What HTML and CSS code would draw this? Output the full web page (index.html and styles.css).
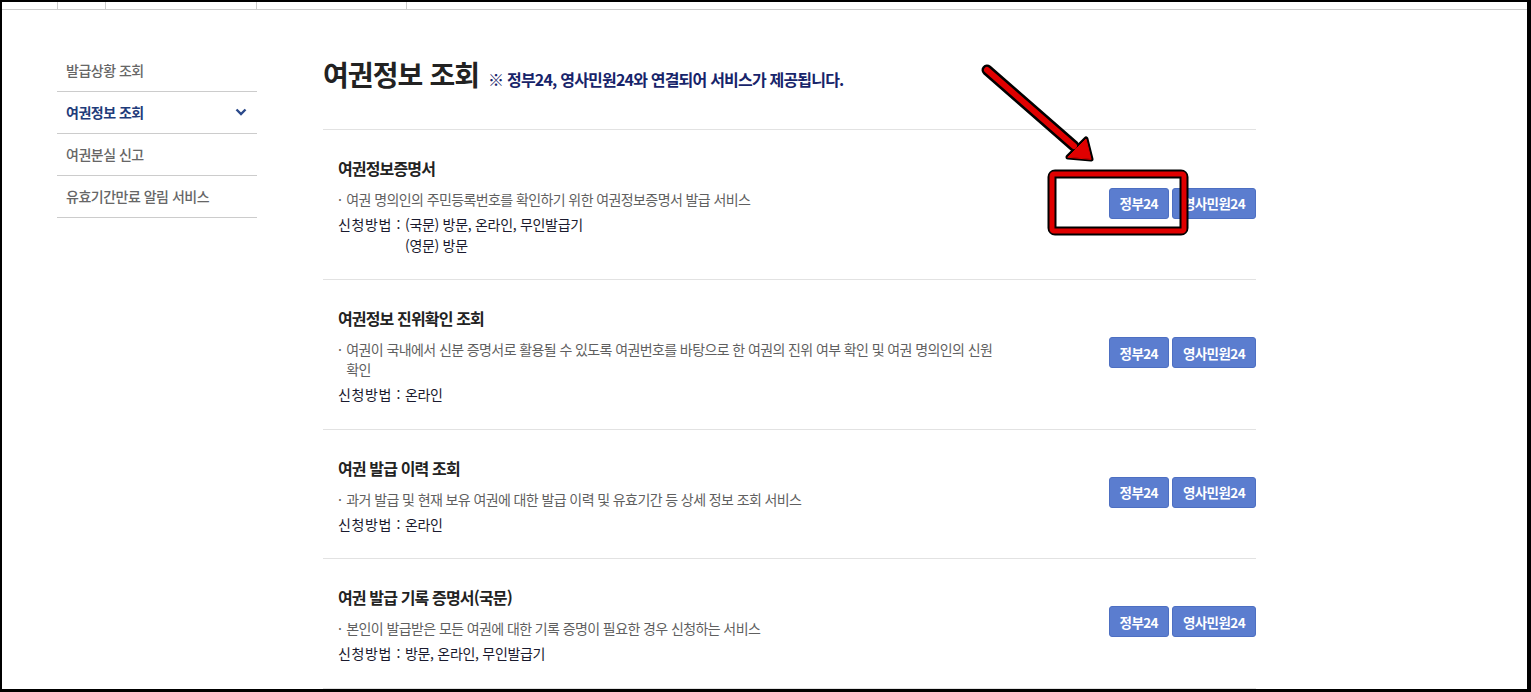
FILE: index.html
```html
<!DOCTYPE html>
<html lang="ko">
  <head>
    <meta charset="UTF-8" />
    <title>여권정보 조회</title>
    <link rel="stylesheet" href="styles.css" />
  </head>
  <body>
    <div class="frame">
      <div class="top-tabs">
        <span class="tab tab-sm"></span>
        <span class="tab tab-md"></span>
        <span class="tab tab-md"></span>
        <span class="tab tab-rest"></span>
      </div>

      <div class="wrap">
        <!-- 사이드 메뉴 -->
        <nav class="side-menu">
          <a href="#" class="side-item">발급상황 조회</a>
          <a href="#" class="side-item active">
            여권정보 조회
            <svg class="chevron" width="12" height="8" viewBox="0 0 12 8">
              <path d="M1.5 1.5 L6 6 L10.5 1.5" fill="none" stroke="#2b4a8b" stroke-width="2.4" />
            </svg>
          </a>
          <a href="#" class="side-item">여권분실 신고</a>
          <a href="#" class="side-item">유효기간만료 알림 서비스</a>
        </nav>

        <main class="content">
          <div class="page-title">
            <h2>여권정보 조회</h2>
            <p class="notice">※ 정부24, 영사민원24와 연결되어 서비스가 제공됩니다.</p>
          </div>

          <ul class="service-list">
            <li class="service">
              <div class="service-info">
                <h3>여권정보증명서</h3>
                <p class="desc"><span class="dot">·</span><span>여권 명의인의 주민등록번호를 확인하기 위한 여권정보증명서 발급 서비스</span></p>
                <div class="method">
                  <span class="method-label">신청방법 :</span>
                  <span class="method-value">(국문) 방문, 온라인, 무인발급기<br />(영문) 방문</span>
                </div>
              </div>
              <div class="service-btns">
                <a href="#" class="btn">정부24</a>
                <a href="#" class="btn">영사민원24</a>
              </div>
            </li>

            <li class="service">
              <div class="service-info">
                <h3>여권정보 진위확인 조회</h3>
                <p class="desc"><span class="dot">·</span><span>여권이 국내에서 신분 증명서로 활용될 수 있도록 여권번호를 바탕으로 한 여권의 진위 여부 확인 및 여권 명의인의 신원 확인</span></p>
                <div class="method">
                  <span class="method-label">신청방법 :</span>
                  <span class="method-value">온라인</span>
                </div>
              </div>
              <div class="service-btns">
                <a href="#" class="btn">정부24</a>
                <a href="#" class="btn">영사민원24</a>
              </div>
            </li>

            <li class="service">
              <div class="service-info">
                <h3>여권 발급 이력 조회</h3>
                <p class="desc"><span class="dot">·</span><span>과거 발급 및 현재 보유 여권에 대한 발급 이력 및 유효기간 등 상세 정보 조회 서비스</span></p>
                <div class="method">
                  <span class="method-label">신청방법 :</span>
                  <span class="method-value">온라인</span>
                </div>
              </div>
              <div class="service-btns">
                <a href="#" class="btn">정부24</a>
                <a href="#" class="btn">영사민원24</a>
              </div>
            </li>

            <li class="service">
              <div class="service-info">
                <h3>여권 발급 기록 증명서(국문)</h3>
                <p class="desc"><span class="dot">·</span><span>본인이 발급받은 모든 여권에 대한 기록 증명이 필요한 경우 신청하는 서비스</span></p>
                <div class="method">
                  <span class="method-label">신청방법 :</span>
                  <span class="method-value">방문, 온라인, 무인발급기</span>
                </div>
              </div>
              <div class="service-btns">
                <a href="#" class="btn">정부24</a>
                <a href="#" class="btn">영사민원24</a>
              </div>
            </li>
          </ul>
        </main>
      </div>
    </div>

    <!-- 강조 표시 (화살표 + 박스) -->
    <svg class="annotation" width="1531" height="692" viewBox="0 0 1531 692">
      <g stroke-linejoin="round" stroke-linecap="round">
        <path d="M987 70 L1074 146" stroke="#000" stroke-width="11" fill="none" />
        <polygon points="1068,157 1086,139 1091,159" fill="#000" stroke="#000" stroke-width="5" />
        <path d="M987 70 L1074 146" stroke="#e00000" stroke-width="6" fill="none" />
        <polygon points="1068,157 1086,139 1091,159" fill="#e00000" stroke="#e00000" stroke-width="1" />
        <rect x="1052" y="174" width="132" height="57" rx="3" fill="none" stroke="#000" stroke-width="9" />
        <rect x="1052" y="174" width="132" height="57" rx="2" fill="none" stroke="#e00000" stroke-width="5" />
      </g>
    </svg>
  </body>
</html>
```

FILE: styles.css
```css
/* Variables */
:root {
  --navy: #1e3b7a;
  --text-dark: #222;
  --text-gray: #5f5f5f;
  --line: #ccc;
  --line-light: #e2e2e2;
  --btn-blue: #5b7dcf;
}

* {
  box-sizing: border-box;
}

body {
  margin: 0;
  background: #000;
  font-family: "Noto Sans CJK KR", "Noto Sans", sans-serif;
}

a {
  text-decoration: none;
}

/* Cadre de la capture */
.frame {
  width: 1531px;
  height: 692px;
  border-style: solid;
  border-color: #000;
  border-width: 2px 4px 3px 2px;
  background: #fff;
  overflow: hidden;
}

/* Bande d'onglets en haut */
.top-tabs {
  display: flex;
  height: 8px;
  border-bottom: 1px solid var(--line);
  padding-left: 55px;
}

.tab {
  border-left: 1px solid var(--line);
}

.tab-sm {
  width: 48px;
}

.tab-md {
  width: 151px;
}

.tab-md + .tab-md {
  width: 150px;
}

.tab-rest {
  flex: 1;
}

.wrap {
  display: flex;
  gap: 66px;
  padding-left: 55px;
}

/* Menu latéral */
.side-menu {
  width: 200px;
  margin-top: 40px;
  display: flex;
  flex-direction: column;
}

.side-item {
  display: flex;
  align-items: center;
  justify-content: space-between;
  height: 42px;
  padding: 0 9px 1px;
  border-bottom: 1px solid var(--line);
  color: #666;
  font-size: 14px;
  font-weight: 500;
  letter-spacing: -0.5px;
}

.side-item.active {
  color: var(--navy);
  font-weight: 700;
}

.chevron {
  margin-right: 1px;
}

/* Contenu principal */
.content {
  width: 933px;
  margin-top: 40px;
}

.page-title {
  display: flex;
  align-items: baseline;
  gap: 9px;
  height: 50px;
  margin-bottom: 29px;
}

.page-title h2 {
  margin: 0;
  font-size: 28px;
  line-height: 48px;
  font-weight: 700;
  color: var(--text-dark);
  letter-spacing: -0.9px;
}

.notice {
  margin: 0;
  font-size: 16px;
  font-weight: 700;
  color: #17246a;
  letter-spacing: -0.8px;
}

.service-list {
  list-style: none;
  margin: 0;
  padding: 0;
  border-top: 1px solid var(--line-light);
}

.service {
  display: flex;
  align-items: center;
  justify-content: space-between;
  padding: 27px 0 24px 15px;
  border-bottom: 1px solid var(--line-light);
}

.service-info h3 {
  margin: 0 0 10px;
  font-size: 16px;
  line-height: 22px;
  font-weight: 700;
  color: var(--text-dark);
  letter-spacing: -0.85px;
}

.desc {
  display: flex;
  gap: 5px;
  width: 665px;
  margin: 0;
  font-size: 14px;
  line-height: 20px;
  color: var(--text-gray);
  letter-spacing: -0.6px;
}

.dot {
  flex: none;
}

.method {
  display: flex;
  gap: 4px;
  margin-top: 5px;
  font-size: 14px;
  line-height: 20.5px;
  color: #1a1a2e;
  letter-spacing: -0.3px;
}

.method-label {
  flex: none;
  letter-spacing: 0.6px;
}

/* Boutons */
.service-btns {
  display: flex;
  gap: 3px;
  margin-bottom: 6px;
}

.btn {
  display: inline-flex;
  align-items: center;
  height: 31px;
  padding: 0 10px;
  border: 1px solid #4d6fc2;
  border-radius: 3px;
  background: var(--btn-blue);
  color: #fff;
  font-size: 13.5px;
  font-weight: 700;
  letter-spacing: -0.6px;
}

/* Annotation */
.annotation {
  position: fixed;
  top: 0;
  left: 0;
  pointer-events: none;
}
```
